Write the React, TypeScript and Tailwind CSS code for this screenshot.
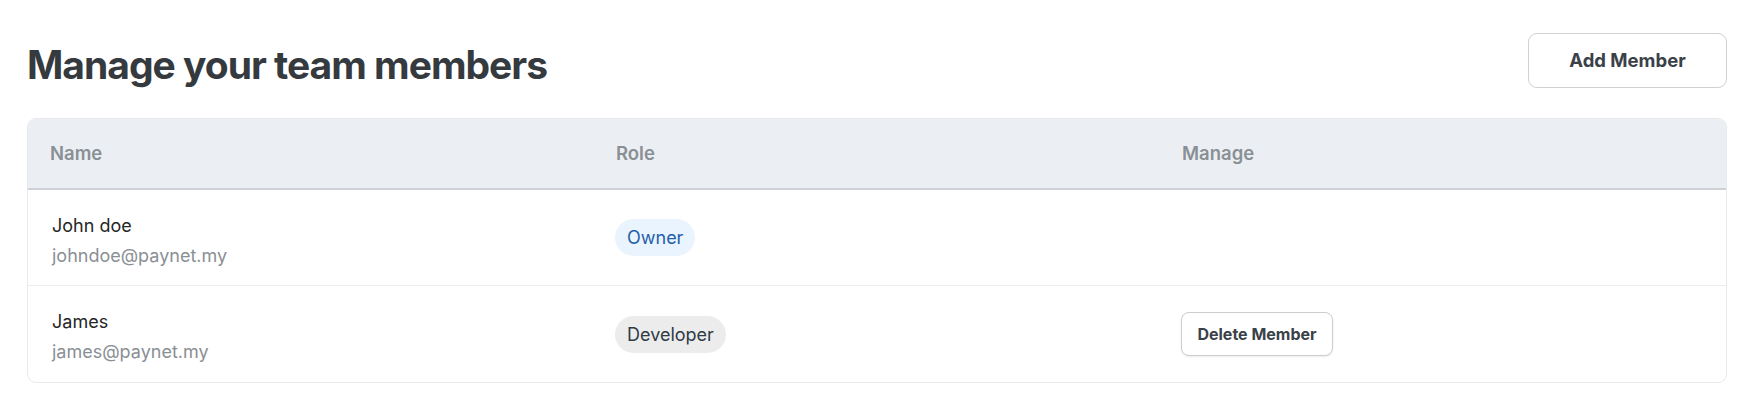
import React from "react";

const members = [
  { name: "John doe", email: "johndoe@paynet.my", role: "Owner", canDelete: false },
  { name: "James", email: "james@paynet.my", role: "Developer", canDelete: true },
];

export default function App() {
  return (
    <div className="min-h-[409px] bg-white pl-[27px] pr-[21px] pt-[33px] font-['Inter',sans-serif]">
      <div className="flex items-start justify-between">
        <h1 className="mt-[12px] text-[39px] font-bold leading-[40px] tracking-[-1px] text-[#353a3f]">
          Manage your team members
        </h1>
        <button className="h-[55px] w-[199px] rounded-[9px] border border-[#cfd1d3] bg-white text-[18.5px] font-bold text-[#3b4148]">
          Add Member
        </button>
      </div>

      <div className="mt-[30px] overflow-hidden rounded-[9px] border border-[#e8e9eb]">
        <div className="grid h-[71px] grid-cols-3 items-center border-b-2 border-[#cdd0d4] bg-[#ebeff3] text-[18.5px] font-semibold text-[#8a8f95]">
          <div className="pl-[22px]">Name</div>
          <div className="pl-[22px]">Role</div>
          <div className="pl-[22px]">Manage</div>
        </div>
        {members.map((m, i) => (
          <div
            key={m.email}
            className={`grid h-[96px] grid-cols-3 items-center ${i < members.length - 1 ? "border-b border-[#ececee]" : ""}`}
          >
            <div className="flex flex-col pl-[24px] pt-[6px]">
              <span className="text-[18px] leading-[26px] text-[#262626]">{m.name}</span>
              <span className="mt-[4px] text-[18px] leading-[26px] text-[#8a8f94]">{m.email}</span>
            </div>
            <div className="pl-[21px]">
              {m.role === "Owner" ? (
                <span className="inline-flex h-[37px] items-center rounded-full bg-[#eaf4ff] px-[12px] text-[18px] text-[#1f5fa8]">
                  {m.role}
                </span>
              ) : (
                <span className="inline-flex h-[37px] items-center rounded-full bg-[#ececec] px-[12px] text-[18px] text-[#2f3a45]">
                  {m.role}
                </span>
              )}
            </div>
            <div className="pl-[21px]">
              {m.canDelete && (
                <button className="h-[44px] w-[152px] rounded-[8px] border border-[#cbcdd0] bg-white text-[16px] font-bold text-[#3b4148] shadow-[0_1px_2px_rgba(0,0,0,0.08)]">
                  Delete Member
                </button>
              )}
            </div>
          </div>
        ))}
      </div>
    </div>
  );
}
